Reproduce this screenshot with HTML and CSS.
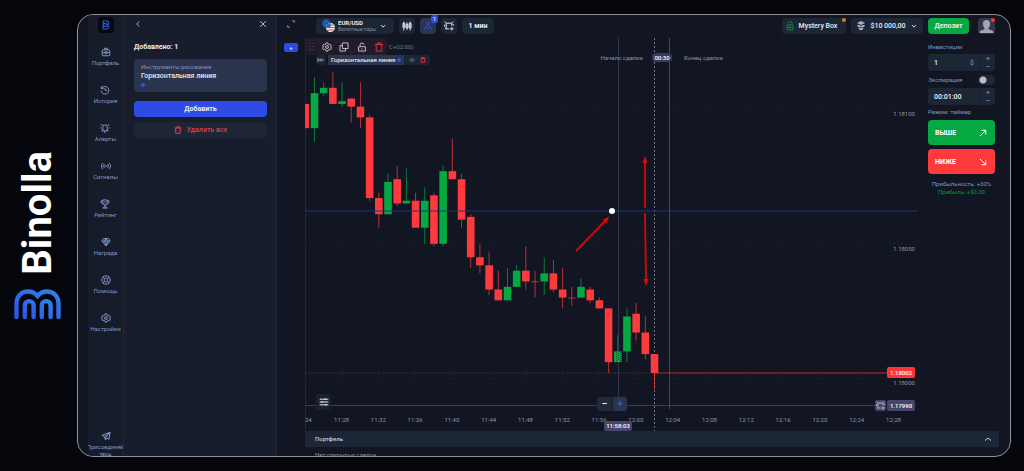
FILE: index.html
```html
<!DOCTYPE html>
<html lang="ru">

<head>
    <meta charset="UTF-8">
    <meta name="viewport" content="width=device-width, initial-scale=1.0">
    <title>Binolla</title>
    <link rel="stylesheet" href="styles.css">
</head>

<body>
    <svg class="sprite" aria-hidden="true">
        <symbol id="i-case" viewBox="0 0 16 16"><rect x="2" y="4.5" width="12" height="9.5" rx="1.5"/><path d="M5.5 4.5v-2.500h5v2.500M2 9h4.500M9.500 9H14M6.500 7.500h3v3h-3z"/></symbol>
        <symbol id="i-history" viewBox="0 0 16 16"><path d="M2.500 5.500A6.200 6.200 0 1 1 1.800 9M2 2v3.800h3.800M8 4.500V8.500h3.500"/></symbol>
        <symbol id="i-bell" viewBox="0 0 16 16"><path d="M2.500 12.500h11M4.500 12.500V3.500h7v9M6.500 14.500h3M3 2 1 3.500M13 2l2 1.500M1.500 7v2M14.500 7v2"/></symbol>
        <symbol id="i-signal" viewBox="0 0 16 16"><path d="M3 3a7 7 0 0 0 0 10M13 3a7 7 0 0 1 0 10M5.500 5a4.200 4.200 0 0 0 0 6M10.500 5a4.200 4.200 0 0 1 0 6M6 8h4"/></symbol>
        <symbol id="i-cup" viewBox="0 0 16 16"><path d="M4.500 1.500h7V6a3.500 3.500 0 0 1-7 0zM4.500 3H1.500c0 3 1 4.500 3.500 5M11.500 3h3c0 3-1 4.500-3.500 5M8 9.500v3M4.500 14.500c0-2.500 7-2.500 7 0zM8 3.500v3"/></symbol>
        <symbol id="i-gem" viewBox="0 0 16 16"><path d="M4 2.500h8L14.500 6.500 8 14 1.500 6.500zM1.500 6.500h13M5.500 6.500 8 14l2.500-7.500L8 2.500z"/></symbol>
        <symbol id="i-help" viewBox="0 0 16 16"><circle cx="8" cy="8" r="6.500"/><rect x="5.200" y="5.200" width="5.600" height="5.600" rx="1.500"/><path d="M3.500 3.500l2 2M12.500 3.500l-2 2M3.500 12.500l2-2M12.500 12.500l-2-2"/></symbol>
        <symbol id="i-gear" viewBox="0 0 16 16"><path d="M6.500 1.500h3l.6 2 1.500.8 2-.5 1.500 2.600L13.700 8l1.400 1.600-1.500 2.600-2-.5-1.500.8-.6 2h-3l-.6-2-1.500-.8-2 .5L.9 9.600 2.300 8 .9 6.400l1.500-2.600 2 .5 1.500-.8z"/><circle cx="8" cy="8" r="2.300"/></symbol>
        <symbol id="i-plane" viewBox="0 0 16 16"><path d="M14.500 2 1.500 7l4 2 1.500 5 2.200-3 3.300 2.500zM14.500 2l-9 7M14.500 2 7.500 10v4"/></symbol>
        <symbol id="i-trash" viewBox="0 0 16 16"><path d="M1.500 4h13M5.500 4V1.500h5V4M3.500 4v10.500h9V4"/></symbol>
        <symbol id="i-copy" viewBox="0 0 16 16"><path d="M5.500 1.500h9v9h-9zM5.500 5.500h-4v9h9v-4"/></symbol>
        <symbol id="i-lock" viewBox="0 0 16 16"><path d="M2.500 7.500h11v7h-11zM5 7.500V4.500a3 3 0 0 1 6 0M8 10v2"/></symbol>
        <symbol id="i-eye" viewBox="0 0 16 16"><path d="M1 8c3.500-6 10.500-6 14 0-3.500 6-10.500 6-14 0z"/><circle cx="8" cy="8" r="2"/></symbol>
        <symbol id="i-left" viewBox="0 0 16 16"><path d="M10.500 3 5.500 8l5 5"/></symbol>
        <symbol id="i-down" viewBox="0 0 16 16"><path d="M2.500 5.500 8 11l5.500-5.500"/></symbol>
        <symbol id="i-up" viewBox="0 0 16 16"><path d="M2 11 8 6l6 5"/></symbol>
        <symbol id="i-close" viewBox="0 0 16 16"><path d="M2 2l12 12M14 2 2 14"/></symbol>
        <symbol id="i-expand" viewBox="0 0 16 16"><path d="M10.500 1.500h4v4M1.500 10.500v4h4"/></symbol>
        <symbol id="i-candles" viewBox="0 0 16 16"><path d="M3 1v14M8 2v12M13 1v14M1.500 4h3v6h-3zM6.500 6h3v5h-3zM11.500 4h3v7h-3z"/></symbol>
        <symbol id="i-compass" viewBox="0 0 16 16"><circle cx="8" cy="3.500" r="2"/><path d="M7 5.500 2 14.500M9 5.500l5 9M3.500 10c3 2 6 2 9 0"/></symbol>
        <symbol id="i-frame" viewBox="0 0 16 16"><path d="M3.500 12V3.500h9V8M3.500 12.500h5M1 1l2 2M15 1l-2 2M1 6v3M15 5v2M1.500 12.500h2M12.500 10v5M10 12.500h5"/></symbol>
        <symbol id="i-sliders" viewBox="0 0 16 16"><path d="M1 3.500h14M1 8h14M1 12.500h14M10 2v3M5 6.500v3M11 11v3"/></symbol>
        <symbol id="i-collapse" viewBox="0 0 16 16"><path d="M2 4v8M14 8H5M8 5 5 8l3 3"/></symbol>
        <symbol id="i-ne" viewBox="0 0 16 16"><path d="M2 14 13.500 2.500M5 2.500h8.500V11"/></symbol>
        <symbol id="i-se" viewBox="0 0 16 16"><path d="M2 2l11.500 11.500M5 13.500h8.500V5"/></symbol>
    </svg>

    <div class="brand">
        <span class="brand-name">Binolla</span>
        <svg class="brand-logo" viewBox="0 0 48 31">
            <defs>
                <linearGradient id="logo-fill" x1="0" y1="1" x2="1" y2="0">
                    <stop offset="0" stop-color="#2f55e6"/>
                    <stop offset="1" stop-color="#2f80ea"/>
                </linearGradient>
            </defs>
            <g fill="none" stroke="url(#logo-fill)" stroke-width="4.400" stroke-linecap="round">
                <path d="M2.500 28V15C2.500 6.500 8 2.500 14 2.500c4 0 7 1.500 9.500 4.500 2.500-3 5.500-4.500 9.500-4.500 6 0 11.500 4 11.500 12.500v13"/>
                <path d="M10.800 28V16.500a4.400 4.400 0 0 1 8.800 0V28M27.800 28V16.500a4.400 4.400 0 0 1 8.800 0V28"/>
            </g>
        </svg>
    </div>

    <div class="app">
        <nav class="sidebar">
            <a class="home" href="#" aria-label="Binolla">
                <svg class="home-logo" viewBox="0 0 10 12"><path d="M1.500 1H5a2.500 2.500 0 0 1 1.500 4.800A2.700 2.700 0 0 1 5.500 11h-4zM2 4.200h4M2 7.600h4"/></svg>
            </a>
            <a class="nav-item" href="#"><svg class="icon"><use href="#i-case"/></svg>Портфель</a>
            <a class="nav-item" href="#"><svg class="icon"><use href="#i-history"/></svg>История</a>
            <a class="nav-item" href="#"><svg class="icon"><use href="#i-bell"/></svg>Алерты</a>
            <a class="nav-item" href="#"><svg class="icon"><use href="#i-signal"/></svg>Сигналы</a>
            <a class="nav-item" href="#"><svg class="icon"><use href="#i-cup"/></svg>Рейтинг</a>
            <a class="nav-item" href="#"><svg class="icon"><use href="#i-gem"/></svg>Награда</a>
            <a class="nav-item" href="#"><svg class="icon"><use href="#i-help"/></svg>Помощь</a>
            <a class="nav-item" href="#"><svg class="icon"><use href="#i-gear"/></svg>Настройки</a>
            <a class="nav-item join" href="#"><svg class="icon"><use href="#i-plane"/></svg><span>Присоединяй<br>тесь</span></a>
        </nav>

        <aside class="panel">
            <div class="panel-head">
                <button class="ghost" aria-label="Назад"><svg class="icon small"><use href="#i-left"/></svg></button>
                <button class="ghost" aria-label="Закрыть"><svg class="icon small"><use href="#i-close"/></svg></button>
            </div>
            <h2>Добавлено: 1</h2>
            <div class="tool-card">
                <span class="tool-type">Инструменты рисования</span>
                <span class="tool-name">Горизонтальная линия</span>
                <i class="color-dot"></i>
            </div>
            <button class="btn-add">Добавить</button>
            <button class="btn-clear"><svg class="icon small"><use href="#i-trash"/></svg>Удалить все</button>
        </aside>

        <div class="gutter">
            <button class="ghost" aria-label="На весь экран"><svg class="icon small"><use href="#i-expand"/></svg></button>
            <button class="new-tab" aria-label="Новый график">+</button>
        </div>

        <main class="workspace">
            <header class="topbar">
                <button class="chip pair">
                    <svg class="flags" viewBox="0 0 13 13">
                        <circle cx="4.500" cy="4.500" r="4.500" fill="#1d4f9e"/>
                        <circle cx="4.500" cy="4.500" r="2.500" fill="none" stroke="#4f8fc9" stroke-dasharray="1 1"/>
                        <circle cx="8.500" cy="8.500" r="4.500" fill="#f1eef0"/>
                        <path d="M5 6h7.200M4.500 8.500h8.300M5 11h7" stroke="#e0424c"/>
                        <path d="M4 8.500a4.500 4.500 0 0 1 4.500-4.500v4.500z" fill="#2760b8"/>
                    </svg>
                    <span class="pair-text"><b>EUR/USD</b><small>Валютные пары</small></span>
                    <svg class="icon tiny"><use href="#i-down"/></svg>
                </button>
                <button class="chip square" aria-label="Тип графика"><svg class="icon"><use href="#i-candles"/></svg></button>
                <button class="chip square active" aria-label="Рисование"><svg class="icon"><use href="#i-compass"/></svg><span class="badge">1</span></button>
                <button class="chip square" aria-label="Алерт"><svg class="icon"><use href="#i-frame"/></svg></button>
                <button class="chip period">1 мин</button>

                <div class="account">
                    <button class="chip mystery">
                        <svg class="gift" viewBox="0 0 8 10"><path d="M1 4h6v5H1zM2 4V2.500a2 2 0 0 1 4 0V4M4 4v5M1 6.500h6"/></svg>
                        Mystery Box<span class="dot orange"></span>
                    </button>
                    <button class="chip balance">
                        <svg class="coins" viewBox="0 0 8 9"><path d="M4 0 8 2 4 4 0 2zM0 4h2l2 1 2-1h2L7 6H1zM1.500 6.800h5L5.500 9h-3z"/></svg>
                        $10 000,00
                        <svg class="icon tiny"><use href="#i-down"/></svg>
                    </button>
                    <button class="deposit">Депозит</button>
                    <button class="avatar" aria-label="Профиль">
                        <svg viewBox="0 0 17 16"><path d="M8.500 2c2.500 0 3.600 1.700 3.600 3.800 0 2-.6 3.200-1.600 4.200v1.200l4 1.500c.8.300 1 1.200 1 2.300h-14c0-1.100.2-2 1-2.300l4-1.500V10c-1-1-1.600-2.200-1.600-4.200C4.900 3.700 6 2 8.500 2z"/></svg>
                        <span class="dot red"></span>
                    </button>
                </div>
            </header>

            <div class="trade">
                <section class="chart-box">
                    <svg id="chart" class="chart" viewBox="0 0 613 393"></svg>
                    <div class="overlay">
                        <div class="draw-tools">
                            <svg class="grip" viewBox="0 0 5 9"><path d="M1 1v7M4 1v7" stroke-dasharray="1 2"/></svg>
                            <button class="ghost" aria-label="Настройки линии"><svg class="icon"><use href="#i-gear"/></svg></button>
                            <button class="ghost" aria-label="Копировать"><svg class="icon"><use href="#i-copy"/></svg></button>
                            <button class="ghost" aria-label="Заблокировать"><svg class="icon"><use href="#i-lock"/></svg></button>
                            <button class="ghost danger" aria-label="Удалить"><svg class="icon"><use href="#i-trash"/></svg></button>
                        </div>
                        <span class="zone">'C+02:00)</span>
                    </div>
                    <div class="drawing">
                        <button class="fold" aria-label="Свернуть"><svg class="icon small"><use href="#i-collapse"/></svg></button>
                        <div class="drawing-row">
                            <span class="drawing-name">Горизонтальная линия <i class="color-dot"></i></span>
                            <button class="ghost muted" aria-label="Скрыть"><svg class="icon tiny"><use href="#i-eye"/></svg></button>
                            <button class="ghost danger" aria-label="Удалить линию"><svg class="icon tiny"><use href="#i-trash"/></svg></button>
                        </div>
                    </div>
                    <button class="chart-settings" aria-label="Параметры"><svg class="icon"><use href="#i-sliders"/></svg></button>
                    <div class="zoomer">
                        <button aria-label="Уменьшить">−</button>
                        <button class="plus" aria-label="Увеличить">+</button>
                    </div>
                </section>

                <form class="order">
                    <label for="amount">Инвестиции</label>
                    <div class="field">
                        <input id="amount" type="text" value="1">
                        <span class="unit">$</span>
                        <div class="stepper"><button type="button">+</button><button type="button">−</button></div>
                    </div>
                    <div class="expiry">
                        <label for="expiry-mode">Экспирация</label>
                        <input id="expiry-mode" class="toggle" type="checkbox">
                    </div>
                    <div class="field">
                        <input id="time" type="text" value="00:01:00" aria-label="Время">
                        <div class="stepper"><button type="button">+</button><button type="button">−</button></div>
                    </div>
                    <span class="mode">Режим: таймер</span>
                    <button type="button" class="deal higher">ВЫШЕ<svg class="icon small"><use href="#i-ne"/></svg></button>
                    <button type="button" class="deal lower">НИЖЕ<svg class="icon small"><use href="#i-se"/></svg></button>
                    <p class="payout">Прибыльность: +30%<br><span>Прибыль: +$0,30</span></p>
                </form>
            </div>

            <section class="portfolio">
                <button class="portfolio-bar">Портфель<svg class="icon small"><use href="#i-up"/></svg></button>
                <p>Нет открытых сделок</p>
            </section>
        </main>
    </div>

    <script src="chart.js"></script>
</body>

</html>
```

FILE: styles.css
```css
* {
    box-sizing: border-box;
}

body {
    display: flex;
    height: 100vh;
    margin: 0;
    overflow: hidden;
    background: #05060b;
    color: #e8ebf2;
    font-family: Roboto, "Liberation Sans", sans-serif;
    font-size: 6px;
    line-height: 8px;
}

button,
input {
    margin: 0;
    padding: 0;
    border: none;
    color: inherit;
    font: inherit;
}

button {
    display: flex;
    align-items: center;
    justify-content: center;
    background: none;
    cursor: pointer;
}

a {
    color: inherit;
    text-decoration: none;
}

.sprite {
    display: none;
}

.icon {
    flex: none;
    width: 10px;
    height: 10px;
    fill: none;
    stroke: currentColor;
    stroke-width: 1.6;
}

.icon.small {
    width: 8px;
    height: 8px;
    stroke-width: 2;
}

.icon.tiny {
    width: 6px;
    height: 6px;
    stroke-width: 2.5;
}

/* Логотип слева */
.brand {
    display: flex;
    flex: none;
    flex-direction: column;
    align-items: center;
    justify-content: center;
    gap: 15px;
    width: 77px;
    padding-right: 2px;
}

.brand-name {
    color: #fff;
    font-size: 40px;
    font-weight: 700;
    line-height: 48px;
    writing-mode: vertical-rl;
    transform: rotate(180deg);
}

.brand-logo {
    width: 48px;
    height: 31px;
}

.app {
    display: flex;
    flex: 1;
    min-width: 0;
    margin: 14px 13px 14px 0;
    padding-left: 10px;
    overflow: hidden;
    background: #121622;
    border: 1px solid #909196;
    border-radius: 16px;
}

/* Меню */
.sidebar {
    display: flex;
    flex: none;
    flex-direction: column;
    align-items: center;
    width: 36px;
    overflow: hidden;
    background: #171c2b;
    border-right: 1px solid #212638;
    color: #8196c6;
}

.home {
    display: flex;
    flex: none;
    align-items: center;
    justify-content: center;
    width: 16px;
    height: 16px;
    margin: 2px 0 14px;
    background: #07090f;
    border-radius: 4px;
}

.home-logo {
    width: 8px;
    height: 10px;
    fill: none;
    stroke: #3159d8;
    stroke-width: 1.5;
}

.nav-item {
    display: flex;
    flex: none;
    flex-direction: column;
    align-items: center;
    gap: 2px;
    height: 38px;
    text-align: center;
}

.join {
    height: 25px;
    margin-top: auto;
}

.join span {
    line-height: 7px;
}

/* Панель инструментов рисования */
.panel {
    display: flex;
    flex: none;
    flex-direction: column;
    width: 153px;
    padding: 0 9px 0 10px;
    background: #181d2d;
    border-right: 1px solid #21273a;
}

.panel-head {
    display: flex;
    justify-content: space-between;
    margin-top: 5px;
    color: #a7b3ca;
}

.panel h2 {
    margin: 15px 0 8px;
    font-size: 7px;
    font-weight: 700;
    line-height: 8px;
}

.tool-card {
    display: flex;
    flex-direction: column;
    height: 33px;
    padding: 4px 7px;
    background: #2a344d;
    border-radius: 4px;
}

.tool-type {
    color: #8193ba;
}

.tool-name {
    font-size: 7px;
    line-height: 10px;
    font-weight: 500;
}

.color-dot {
    display: inline-block;
    width: 4px;
    height: 4px;
    margin-top: 2px;
    background: #1f5bea;
    border-radius: 50%;
}

.btn-add,
.btn-clear {
    height: 16px;
    border-radius: 4px;
    font-size: 7px;
    font-weight: 700;
}

.btn-add {
    margin-top: 9px;
    background: #2f4be6;
}

.btn-clear {
    gap: 5px;
    margin-top: 5px;
    background: #1c2635;
    color: #d8434e;
    font-weight: 500;
}

.gutter {
    display: flex;
    flex: none;
    flex-direction: column;
    align-items: center;
    gap: 15px;
    width: 28px;
    padding-top: 5px;
    color: #8b93a6;
}

.new-tab {
    width: 14px;
    height: 9px;
    background: #2f4be6;
    border-radius: 2px;
    color: #fff;
}

.workspace {
    display: flex;
    flex: 1;
    flex-direction: column;
    min-width: 0;
    padding-right: 11px;
}

/* Верхняя строка */
.topbar {
    display: flex;
    flex: none;
    align-items: center;
    gap: 5px;
    height: 21px;
    padding: 0 4px 0 11px;
}

.chip {
    position: relative;
    flex: none;
    height: 16px;
    background: #1c2635;
    border-radius: 4px;
}

.pair {
    gap: 3px;
    width: 78px;
    padding: 0 8px 0 6px;
}

.flags {
    flex: none;
    width: 13px;
    height: 13px;
}

.pair-text {
    display: flex;
    flex: 1;
    flex-direction: column;
    text-align: left;
    line-height: 6px;
}

.pair-text small {
    color: #7d89a3;
    font-size: 5px;
}

.square {
    width: 16px;
}

.active {
    background: #2a3550;
    color: #2f4be6;
}

.badge {
    position: absolute;
    top: -3px;
    right: -2px;
    width: 7px;
    height: 8px;
    background: #2f4be6;
    border-radius: 2px;
    color: #fff;
}

.period {
    width: 32px;
    font-size: 7px;
    font-weight: 700;
}

.account {
    display: flex;
    gap: 5px;
    margin-left: auto;
    font-size: 7px;
    font-weight: 500;
}

.mystery {
    gap: 5px;
    width: 64px;
}

.gift {
    width: 8px;
    height: 10px;
    fill: none;
    stroke: #147a3c;
}

.balance {
    gap: 5px;
    width: 72px;
}

.coins {
    width: 8px;
    height: 9px;
    fill: #a9b2c2;
}

.deposit {
    width: 41px;
    background: #05a841;
    border-radius: 4px;
    font-weight: 700;
}

.avatar {
    position: relative;
    width: 17px;
    height: 16px;
    margin-left: 4px;
    background: #34364b;
    border-radius: 4px;
}

.avatar svg {
    width: 17px;
    height: 16px;
    fill: #a2a5b1;
}

.dot {
    position: absolute;
    top: 0;
    right: 0;
    width: 4px;
    height: 4px;
    border-radius: 50%;
}

.orange {
    background: #e07813;
}

.red {
    background: #ff3338;
}

/* График */
.trade {
    display: flex;
    flex: none;
    margin-top: 2px;
}

.chart-box {
    position: relative;
    flex: 1;
    min-width: 0;
}

.chart {
    display: block;
    width: 100%;
    height: auto;
}

.chart text {
    fill: #8f95a3;
    font-size: 6px;
}

.chart .price {
    text-anchor: end;
}

.chart .time {
    text-anchor: middle;
}

.chart .tag {
    fill: #fff;
    font-weight: 500;
    text-anchor: middle;
}

.overlay {
    position: absolute;
    top: 0;
    left: 1px;
    display: flex;
    align-items: center;
    gap: 1px;
    color: #767c8a;
}

.draw-tools {
    display: flex;
    align-items: center;
    justify-content: space-between;
    width: 81px;
    height: 17px;
    padding: 0 3px;
    background: #211b2a;
    border-radius: 3px;
    color: #bdbcc8;
}

.grip {
    width: 5px;
    height: 9px;
    stroke: #555162;
}

.danger {
    color: #d7303b;
}

.muted {
    color: #58647a;
}

.drawing {
    position: absolute;
    top: 17px;
    left: 11px;
    display: flex;
    gap: 2px;
}

.fold {
    width: 10px;
    height: 10px;
    background: #1b2231;
    border-radius: 2px;
    color: #a6acb8;
}

.drawing-row {
    display: flex;
    gap: 5px;
    height: 10px;
    padding-right: 4px;
    background: #1c2535;
    border-radius: 2px;
}

.drawing-name {
    display: flex;
    align-items: center;
    gap: 2px;
    padding: 0 3px;
    background: #2a3550;
    font-weight: 500;
}

.drawing-name .color-dot {
    margin: 0;
}

.chart-settings {
    position: absolute;
    bottom: 21px;
    left: 11px;
    width: 15px;
    height: 16px;
    background: #1a2130;
    border-radius: 3px;
}

.zoomer {
    position: absolute;
    right: 291px;
    bottom: 20px;
    display: flex;
    gap: 1px;
}

.zoomer button {
    width: 15px;
    height: 14px;
    background: #1f293a;
    border-radius: 3px 0 0 3px;
    font-size: 10px;
    font-weight: 700;
}

.zoomer .plus {
    width: 14px;
    background: #2a3550;
    border-radius: 0 3px 3px 0;
    color: #2f55e8;
}

/* Панель сделки */
.order {
    display: flex;
    flex: none;
    flex-direction: column;
    width: 81px;
    padding: 5px 4px 0 10px;
    color: #8396c2;
}

.field {
    display: flex;
    align-items: center;
    height: 17px;
    margin-top: 3px;
    padding-left: 6px;
    background: #1c2635;
    border-radius: 3px;
}

.field input {
    flex: 1;
    min-width: 0;
    background: none;
    color: #eef1f6;
    font-size: 7px;
    font-weight: 500;
}

.unit {
    margin-right: 6px;
    font-size: 7px;
}

.stepper {
    display: flex;
    flex-direction: column;
    width: 15px;
    border-left: 1px solid #18202d;
    font-size: 8px;
}

.expiry {
    display: flex;
    align-items: center;
    justify-content: space-between;
    margin-top: 4px;
}

.toggle {
    width: 17px;
    height: 10px;
    appearance: none;
    background: radial-gradient(circle at 5px 5px, #b9bcc7 3px, transparent 4px) #1f2938;
    border-radius: 5px;
}

.mode {
    margin: 3px 0 4px;
}

.deal {
    justify-content: space-between;
    height: 25px;
    margin-bottom: 4px;
    padding: 0 8px 0 7px;
    border-radius: 4px;
    color: #fff;
    font-size: 7px;
    font-weight: 700;
}

.higher {
    background: #05a841;
}

.lower {
    background: #ff3a3c;
}

.payout {
    margin: 2px 0 0;
    text-align: center;
    white-space: nowrap;
}

.payout span {
    color: #109443;
}

/* Портфель */
.portfolio {
    flex: none;
}

.portfolio-bar {
    justify-content: space-between;
    width: 100%;
    height: 16px;
    padding: 0 7px 0 10px;
    background: #1c2636;
    color: #c8cedb;
    font-weight: 500;
}

.portfolio p {
    margin: 4px 10px;
    color: #8c93a3;
}
```

FILE: chart.js
```javascript
const svg = document.getElementById('chart');
const step = 9.19;
const green = '#05a841';
const red = '#ff3a3c';

// [high, open, close, low] в пунктах от 1.18000
const candles = [
    [102, 102, 93, 93], [112, 93, 106, 88], [110, 106, 108, 105], [114, 108, 102, 102],
    [110, 102, 103, 101], [104, 104, 101, 95], [110, 101, 97, 93], [98, 97, 67, 66],
    [69, 67, 61, 56], [76, 61, 73, 61], [79, 74, 65, 64], [78, 65, 66, 65],
    [69, 66, 56, 56], [71, 56, 66, 50], [69, 68, 50, 49], [79, 50, 77, 49],
    [89, 77, 74, 74], [76, 74, 59, 56], [61, 60, 45, 41], [50, 45, 42, 39],
    [47, 42, 33, 31], [40, 33, 29, 29], [41, 29, 34, 29], [42, 34, 40, 34],
    [49, 40, 36, 33], [40, 36, 36, 30], [45, 36, 39, 31], [44, 39, 33, 32],
    [41, 33, 30, 26], [34, 30, 30, 27], [37, 30, 34, 30], [34, 33, 29, 28],
    [30, 29, 26, 26], [26, 26, 6, 2], [16, 6, 10, 6], [26, 10, 23, 6],
    [28, 24, 17, 14], [23, 17, 9, 7], [9, 9, 2, -4]
];

const y = points => 340.3 - points * 2.69;

function add(name, attrs, text) {
    const el = document.createElementNS('http://www.w3.org/2000/svg', name);
    for (const key in attrs) {
        el.setAttribute(key, attrs[key]);
    }
    if (text) {
        el.textContent = text;
    }
    svg.appendChild(el);
}

function line(x1, y1, x2, y2, stroke, dash) {
    add('line', { x1, y1, x2, y2, stroke, 'stroke-dasharray': dash || 'none' });
}

function tag(x, top, width, height, fill, text) {
    add('rect', { x, y: top, width, height, rx: 2, fill });
    add('text', { x: x + width / 2, y: top + height / 2 + 2, class: 'tag' }, text);
}

// Сетка и подписи времени
line(0.5, 0, 0.5, 393, '#222737');
add('text', { x: 0, y: 384, 'text-anchor': 'start' }, '24');
for (let i = 0; i < 16; i++) {
    const x = 36.5 + i * 36.8;
    const minutes = 28 + i * 4;
    const hour = 11 + Math.floor(minutes / 60);
    line(x, 0, x, 393, '#1a1f2e', '2 2');
    add('text', { x, y: 384, class: 'time' }, hour + ':' + String(minutes % 60).padStart(2, '0'));
}
[[100, '1.18100'], [50, '1.18050'], [0, '1.18000']].forEach(([points, label]) => {
    line(0, y(points), 613, y(points), '#1b2030', '2 2');
    add('text', { x: 610, y: y(points) + 7, class: 'price' }, label);
});

// Линии сделки
line(313.5, 0, 313.5, 360, '#30354a');
line(349.5, 0, 349.5, 393, '#717583', '2 2');
line(364.5, 0, 364.5, 371, '#464955');
line(0, 367.5, 570, 367.5, '#3b404d');
line(0, 335, 350, 335, '#6b2832', '1 1');
line(350, 335, 582, 335, '#b82a30');

candles.forEach(([high, open, close, low], i) => {
    const x = 0.3 + i * step;
    const color = close > open ? green : red;
    const top = y(Math.max(open, close));
    const height = Math.max(Math.abs(open - close) * 2.69, 0.7);
    add('line', { x1: x, y1: y(high), x2: x, y2: y(low), stroke: color, 'stroke-opacity': 0.7 });
    add('rect', { x: x - 3.8, y: top, width: 7.6, height, fill: color });
});
line(311.5, 314, 311.5, 324, '#0b5c38', '1 1');
line(313.5, 313, 313.5, 323, '#0b5c38', '1 1');
line(315.5, 314, 315.5, 324, '#0b5c38', '1 1');

// Горизонтальная линия
line(0, 173, 613, 173, '#1c3577');

// Стрелки
function arrow(x1, y1, x2, y2) {
    const angle = Math.atan2(y2 - y1, x2 - x1) * 180 / Math.PI;
    add('line', { x1, y1, x2, y2, stroke: '#dc0508', 'stroke-width': 1.8 });
    add('path', { d: 'M2 0-5-2.500V2.500z', fill: '#e80508', transform: `translate(${x2} ${y2}) rotate(${angle})` });
}
arrow(271, 213, 303, 180);
arrow(340, 170, 340, 120);
arrow(340, 175, 341, 246);
add('circle', { cx: 307, cy: 173, r: 3, fill: '#fff' });

add('text', { x: 338, y: 22, 'text-anchor': 'end' }, 'Начало сделки');
add('text', { x: 379, y: 22 }, 'Конец сделки');
add('rect', { x: 347, y: 15, width: 20, height: 9, rx: 4, fill: '#393a55' });
add('text', { x: 357, y: 22, class: 'tag' }, '00:30');

tag(582, 329, 28, 11, '#ff3338', '1.18002');
tag(582, 362, 28, 11, '#47466a', '1.17990');
tag(299, 383, 28, 10, '#47466a', '11:58:03');
add('rect', { x: 570, y: 362, width: 11, height: 11, rx: 2, fill: '#47466a' });
add('use', { href: '#i-frame', x: 571, y: 363, width: 9, height: 9, fill: 'none', stroke: '#c6c7d4', 'stroke-width': 1.5 });
```
